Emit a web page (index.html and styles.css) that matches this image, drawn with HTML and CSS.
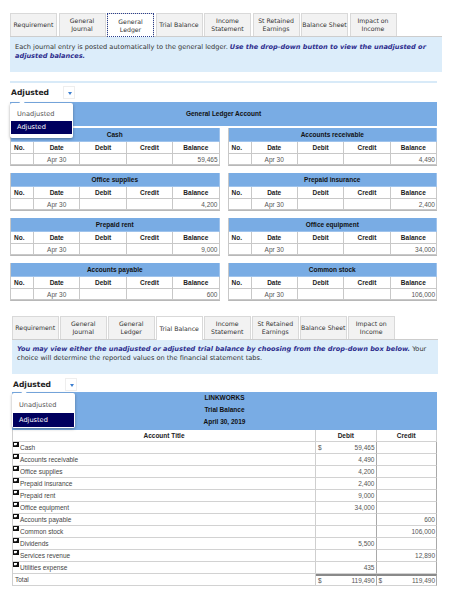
FILE: index.html
```html
<!DOCTYPE html>
<html lang="en">
<head>
<meta charset="utf-8">
<title>General Ledger and Trial Balance</title>
<link rel="stylesheet" href="styles.css">
</head>
<body>

<div class="panel">
  <div class="tabs">
    <div class="tab">Requirement</div>
    <div class="tab">General<br>Journal</div>
    <div class="tab active focus">General<br>Ledger</div>
    <div class="tab">Trial Balance</div>
    <div class="tab">Income<br>Statement</div>
    <div class="tab">St Retained<br>Earnings</div>
    <div class="tab">Balance Sheet</div>
    <div class="tab">Impact on<br>Income</div>
  </div>
  <div class="info">
    Each journal entry is posted automatically to the general ledger. <em>Use the drop-down button to view the unadjusted or</em><br>
    <em>adjusted balances.</em>
  </div>
  <div class="rule"></div>

  <div class="select">
    <div class="select-value">Adjusted</div>
    <div class="select-arrow"></div>
    <ul class="select-menu">
      <li>Unadjusted</li>
      <li class="on">Adjusted</li>
    </ul>
  </div>

  <div class="gl">
    <div class="gl-head">General Ledger Account</div>
    <div class="accounts">
      <table class="acct">
        <colgroup><col class="col-no"><col><col><col><col></colgroup>
        <tr><th colspan="5" class="acct-title">Cash</th></tr>
        <tr class="acct-cols"><th class="no">No.</th><th>Date</th><th>Debit</th><th>Credit</th><th>Balance</th></tr>
        <tr><td></td><td class="c">Apr 30</td><td></td><td></td><td class="r">59,465</td></tr>
      </table>
      <table class="acct">
        <colgroup><col class="col-no"><col><col><col><col></colgroup>
        <tr><th colspan="5" class="acct-title">Accounts receivable</th></tr>
        <tr class="acct-cols"><th class="no">No.</th><th>Date</th><th>Debit</th><th>Credit</th><th>Balance</th></tr>
        <tr><td></td><td class="c">Apr 30</td><td></td><td></td><td class="r">4,490</td></tr>
      </table>
      <table class="acct">
        <colgroup><col class="col-no"><col><col><col><col></colgroup>
        <tr><th colspan="5" class="acct-title">Office supplies</th></tr>
        <tr class="acct-cols"><th class="no">No.</th><th>Date</th><th>Debit</th><th>Credit</th><th>Balance</th></tr>
        <tr><td></td><td class="c">Apr 30</td><td></td><td></td><td class="r">4,200</td></tr>
      </table>
      <table class="acct">
        <colgroup><col class="col-no"><col><col><col><col></colgroup>
        <tr><th colspan="5" class="acct-title">Prepaid insurance</th></tr>
        <tr class="acct-cols"><th class="no">No.</th><th>Date</th><th>Debit</th><th>Credit</th><th>Balance</th></tr>
        <tr><td></td><td class="c">Apr 30</td><td></td><td></td><td class="r">2,400</td></tr>
      </table>
      <table class="acct">
        <colgroup><col class="col-no"><col><col><col><col></colgroup>
        <tr><th colspan="5" class="acct-title">Prepaid rent</th></tr>
        <tr class="acct-cols"><th class="no">No.</th><th>Date</th><th>Debit</th><th>Credit</th><th>Balance</th></tr>
        <tr><td></td><td class="c">Apr 30</td><td></td><td></td><td class="r">9,000</td></tr>
      </table>
      <table class="acct">
        <colgroup><col class="col-no"><col><col><col><col></colgroup>
        <tr><th colspan="5" class="acct-title">Office equipment</th></tr>
        <tr class="acct-cols"><th class="no">No.</th><th>Date</th><th>Debit</th><th>Credit</th><th>Balance</th></tr>
        <tr><td></td><td class="c">Apr 30</td><td></td><td></td><td class="r">34,000</td></tr>
      </table>
      <table class="acct">
        <colgroup><col class="col-no"><col><col><col><col></colgroup>
        <tr><th colspan="5" class="acct-title">Accounts payable</th></tr>
        <tr class="acct-cols"><th class="no">No.</th><th>Date</th><th>Debit</th><th>Credit</th><th>Balance</th></tr>
        <tr><td></td><td class="c">Apr 30</td><td></td><td></td><td class="r">600</td></tr>
      </table>
      <table class="acct">
        <colgroup><col class="col-no"><col><col><col><col></colgroup>
        <tr><th colspan="5" class="acct-title">Common stock</th></tr>
        <tr class="acct-cols"><th class="no">No.</th><th>Date</th><th>Debit</th><th>Credit</th><th>Balance</th></tr>
        <tr><td></td><td class="c">Apr 30</td><td></td><td></td><td class="r">106,000</td></tr>
      </table>
    </div>
  </div>
</div>

<div class="panel panel-tb">
  <div class="tabs">
    <div class="tab">Requirement</div>
    <div class="tab">General<br>Journal</div>
    <div class="tab">General<br>Ledger</div>
    <div class="tab active">Trial Balance</div>
    <div class="tab">Income<br>Statement</div>
    <div class="tab">St Retained<br>Earnings</div>
    <div class="tab">Balance Sheet</div>
    <div class="tab">Impact on<br>Income</div>
  </div>
  <div class="info">
    <em>You may view either the unadjusted or adjusted trial balance by choosing from the drop-down box below.</em> Your<br>
    choice will determine the reported values on the financial statement tabs.
  </div>

  <div class="select">
    <div class="select-value">Adjusted</div>
    <div class="select-arrow"></div>
    <ul class="select-menu">
      <li>Unadjusted</li>
      <li class="on">Adjusted</li>
    </ul>
  </div>

  <div class="tb">
    <div class="tb-head">
      <div>LINKWORKS</div>
      <div>Trial Balance</div>
      <div>April 30, 2019</div>
    </div>
    <table class="tb-table">
      <colgroup><col><col class="col-amt"><col class="col-amt"></colgroup>
      <tr><th>Account Title</th><th>Debit</th><th>Credit</th></tr>
      <tr><td class="acc"><svg class="ico" width="6" height="5" viewBox="0 0 6 5"><rect width="6" height="5" fill="#111"/><path d="M1 1h3v1.4l-1 .9H1z" fill="#fff"/></svg>Cash</td><td class="amt"><span class="cur">$</span>59,465</td><td class="amt"></td></tr>
      <tr><td class="acc"><svg class="ico" width="6" height="5" viewBox="0 0 6 5"><rect width="6" height="5" fill="#111"/><path d="M1 1h3v1.4l-1 .9H1z" fill="#fff"/></svg>Accounts receivable</td><td class="amt">4,490</td><td class="amt"></td></tr>
      <tr><td class="acc"><svg class="ico" width="6" height="5" viewBox="0 0 6 5"><rect width="6" height="5" fill="#111"/><path d="M1 1h3v1.4l-1 .9H1z" fill="#fff"/></svg>Office supplies</td><td class="amt">4,200</td><td class="amt"></td></tr>
      <tr><td class="acc"><svg class="ico" width="6" height="5" viewBox="0 0 6 5"><rect width="6" height="5" fill="#111"/><path d="M1 1h3v1.4l-1 .9H1z" fill="#fff"/></svg>Prepaid insurance</td><td class="amt">2,400</td><td class="amt"></td></tr>
      <tr><td class="acc"><svg class="ico" width="6" height="5" viewBox="0 0 6 5"><rect width="6" height="5" fill="#111"/><path d="M1 1h3v1.4l-1 .9H1z" fill="#fff"/></svg>Prepaid rent</td><td class="amt">9,000</td><td class="amt"></td></tr>
      <tr><td class="acc"><svg class="ico" width="6" height="5" viewBox="0 0 6 5"><rect width="6" height="5" fill="#111"/><path d="M1 1h3v1.4l-1 .9H1z" fill="#fff"/></svg>Office equipment</td><td class="amt">34,000</td><td class="amt"></td></tr>
      <tr><td class="acc"><svg class="ico" width="6" height="5" viewBox="0 0 6 5"><rect width="6" height="5" fill="#111"/><path d="M1 1h3v1.4l-1 .9H1z" fill="#fff"/></svg>Accounts payable</td><td class="amt"></td><td class="amt">600</td></tr>
      <tr><td class="acc"><svg class="ico" width="6" height="5" viewBox="0 0 6 5"><rect width="6" height="5" fill="#111"/><path d="M1 1h3v1.4l-1 .9H1z" fill="#fff"/></svg>Common stock</td><td class="amt"></td><td class="amt">106,000</td></tr>
      <tr><td class="acc"><svg class="ico" width="6" height="5" viewBox="0 0 6 5"><rect width="6" height="5" fill="#111"/><path d="M1 1h3v1.4l-1 .9H1z" fill="#fff"/></svg>Dividends</td><td class="amt">5,500</td><td class="amt"></td></tr>
      <tr><td class="acc"><svg class="ico" width="6" height="5" viewBox="0 0 6 5"><rect width="6" height="5" fill="#111"/><path d="M1 1h3v1.4l-1 .9H1z" fill="#fff"/></svg>Services revenue</td><td class="amt"></td><td class="amt">12,890</td></tr>
      <tr><td class="acc"><svg class="ico" width="6" height="5" viewBox="0 0 6 5"><rect width="6" height="5" fill="#111"/><path d="M1 1h3v1.4l-1 .9H1z" fill="#fff"/></svg>Utilities expense</td><td class="amt">435</td><td class="amt"></td></tr>
      <tr class="total"><td class="acc">Total</td><td class="amt"><span class="cur">$</span>119,490</td><td class="amt"><span class="cur">$</span>119,490</td></tr>
    </table>
  </div>
</div>

</body>
</html>
```

FILE: styles.css
```css
* {
    box-sizing: border-box;
}

body {
    margin: 0;
    padding: 13px 0 0;
    background: #fff;
    color: #333;
    font-family: "DejaVu Sans", Verdana, sans-serif;
}

.panel {
    margin-left: 10px;
    width: 432px;
}

.panel-tb {
    margin: 15px 0 0 12px;
    width: 426px;
}

/* tab strip */

.tabs {
    display: flex;
    gap: 1.5px;
    height: 24px;
    border-bottom: 1px solid #cdcdcd;
}

.tab {
    width: 47px;
    display: flex;
    align-items: center;
    justify-content: center;
    text-align: center;
    white-space: nowrap;
    font-size: 6.2px;
    line-height: 8px;
    color: #333;
    background: #f2f2f2;
    border: 1px solid #d9d9d9;
    border-bottom: 0;
}

    .tab.active {
        background: #fff;
        margin-bottom: -1px;
    }

    .tab.focus {
        outline: 1px dotted #2b3f8f;
        outline-offset: -1px;
    }

.panel-tb .tab {
    width: 46.5px;
}

.info {
    height: 35px;
    padding: 6px 5px 0;
    background: #dcedfa;
    font-size: 6.6px;
    line-height: 8.5px;
    color: #333;
}

    .info em {
        font-weight: bold;
        color: #2e2e8e;
    }

.panel-tb .info {
    height: 34px;
    padding-top: 5px;
}

.rule {
    width: 427px;
    height: 2px;
    margin-top: 8.5px;
    background: #d8eaf8;
}

/* drop-down */

.select {
    position: relative;
    display: flex;
    width: 65px;
    height: 13px;
    margin: 3.5px 0 3px;
}

.panel-tb .select {
    margin: 4px 0 1px;
}

.select-value {
    flex: 1;
    padding-left: 1px;
    font-size: 7.6px;
    font-weight: bold;
    line-height: 13px;
    color: #222;
}

.select-arrow {
    position: relative;
    width: 12px;
    border: 1px solid #eee;
}

    .select-arrow::after {
        content: "";
        position: absolute;
        left: 3.5px;
        top: 4.5px;
        border-left: 2.5px solid transparent;
        border-right: 2.5px solid transparent;
        border-top: 3px solid #3d7fd0;
    }

.select-menu {
    position: absolute;
    top: 17px;
    left: 0;
    z-index: 2;
    width: 63px;
    margin: 0;
    padding: 5px 1px 4px;
    list-style: none;
    background: #fff;
    border-radius: 2px;
    box-shadow: 0 1px 3px rgba(0,0,0,0.35);
    font-size: 6.6px;
    color: #555;
}

    .select-menu::before {
        content: "";
        position: absolute;
        top: -2px;
        left: 10px;
        width: 4px;
        height: 4px;
        background: #fff;
        transform: rotate(45deg);
    }

    .select-menu li {
        height: 13px;
        line-height: 13px;
        padding-left: 6px;
    }

        .select-menu li.on {
            background: #00005e;
            color: #fff;
        }

.panel-tb .select-menu {
    top: 15px;
    padding: 5px 1px 1px;
}

    .panel-tb .select-menu li {
        height: 14.5px;
        line-height: 14.5px;
    }

/* general ledger */

.gl {
    width: 427px;
    font-family: "Liberation Sans", Arial, sans-serif;
    font-size: 6.5px;
}

.gl-head {
    height: 24px;
    margin-bottom: 2px;
    line-height: 24px;
    text-align: center;
    font-weight: bold;
    color: #111;
    background: #79ace4;
}

.accounts {
    display: grid;
    grid-template-columns: 1fr 1fr;
    column-gap: 8px;
    row-gap: 7px;
}

.acct {
    width: 100%;
    table-layout: fixed;
    border-collapse: separate;
    border-spacing: 0;
    border-left: 1px solid #c8c8c8;
    border-bottom: 1px solid #b8b8b8;
}

    .acct .col-no {
        width: 23px;
    }

    .acct th, .acct td {
        padding: 0 1px;
        border-right: 1px solid #c8c8c8;
        border-bottom: 1px solid #c8c8c8;
        color: #555;
        font-weight: normal;
    }

    .acct .acct-title {
        height: 14px;
        background: #79ace4;
        border-color: #9fc3ec;
        font-weight: bold;
        color: #111;
    }

    .acct .acct-cols th {
        height: 12px;
        font-weight: bold;
        color: #222;
    }

        .acct .acct-cols th.no {
            text-align: left;
            padding-left: 3px;
        }

    .acct td {
        height: 11px;
    }

.c {
    text-align: center;
}

.r {
    text-align: right;
}

/* trial balance */

.tb {
    width: 425px;
    font-family: "Liberation Sans", Arial, sans-serif;
    font-size: 6.5px;
}

.tb-head {
    height: 38px;
    line-height: 12px;
    text-align: center;
    font-weight: bold;
    color: #111;
    background: #79ace4;
}

.tb-table {
    width: 100%;
    table-layout: fixed;
    border-collapse: separate;
    border-spacing: 0;
    border-left: 1px solid #cfcfcf;
}

    .tb-table .col-amt {
        width: 60.5px;
    }

    .tb-table th, .tb-table td {
        height: 11.67px;
        padding: 0 1px;
        border-right: 1px solid #cfcfcf;
        border-bottom: 1px solid #d2d2d2;
        color: #444;
        white-space: nowrap;
    }

    .tb-table th {
        height: 12px;
        font-weight: bold;
        color: #222;
    }

    .tb-table .amt {
        text-align: right;
        border-right-color: #a9a9a9;
        color: #555;
    }

    .tb-table .acc {
        padding-left: 0;
        line-height: 11px;
        vertical-align: bottom;
    }

.ico {
    vertical-align: top;
    margin: 0 1px 0 0;
}

.cur {
    float: left;
    padding-left: 1px;
}

.tb-table .total td {
    padding-left: 2px;
}

    .tb-table .total .amt {
        padding-left: 1px;
        border-top: 2px solid #8a8a8a;
    }
```
